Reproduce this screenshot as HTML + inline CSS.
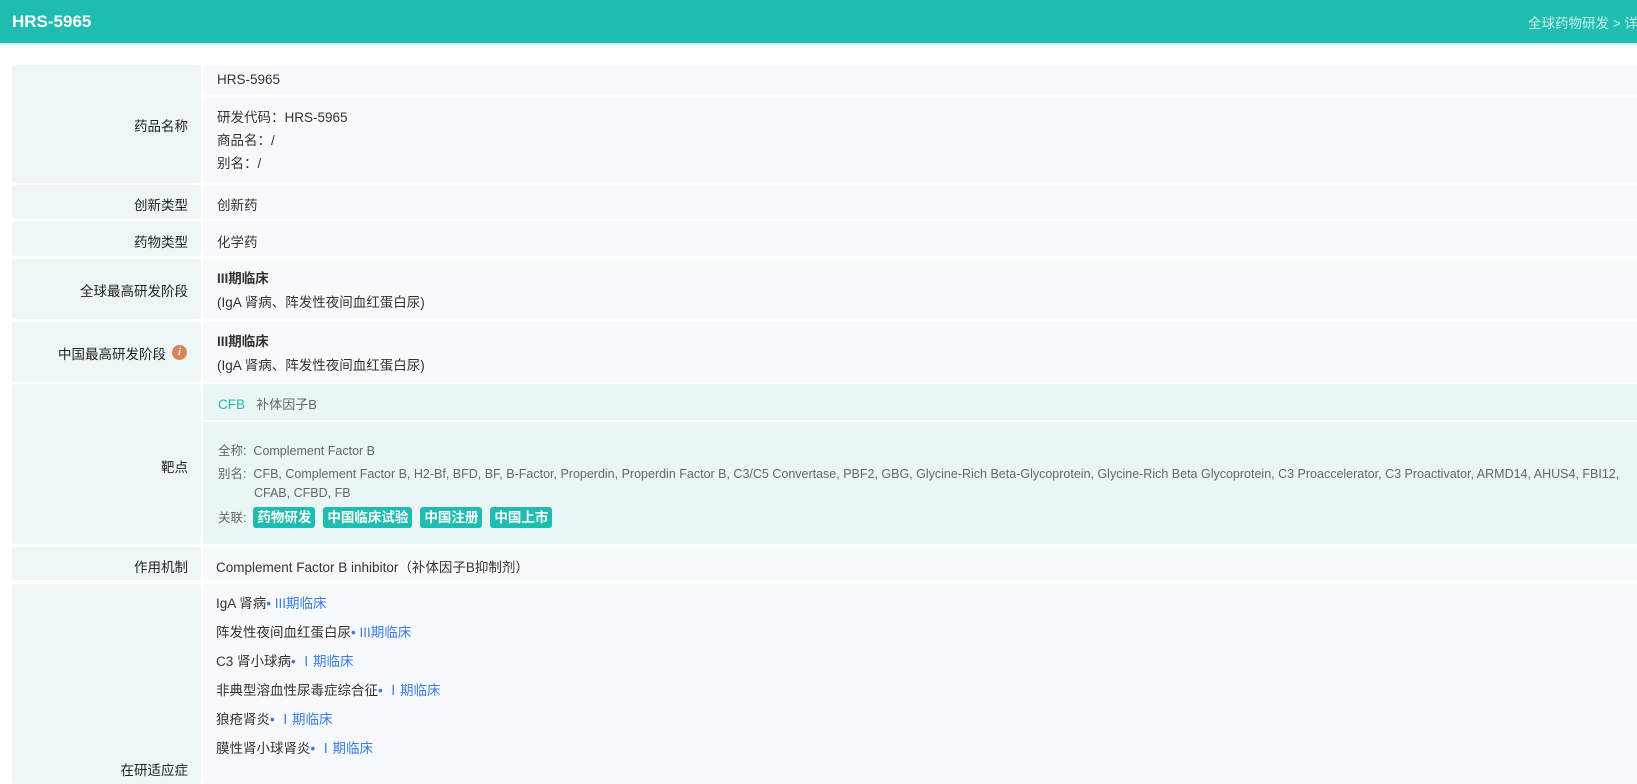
<!DOCTYPE html>
<html><head><meta charset="utf-8"><style>
*{margin:0;padding:0;box-sizing:border-box}
body{width:1637px;height:761px;overflow:hidden;background:#fff;font-family:"Liberation Sans","Noto Sans CJK SC",sans-serif;color:#333;font-size:13.5px;position:relative}
.hd{position:absolute;left:0;top:0;width:1637px;height:45px;background:#1fbdb0;border-bottom:2px solid #d6f0ee}
.hd .t{position:absolute;left:12px;top:12px;color:#fff;font-weight:bold;font-size:17px}
.hd .b{position:absolute;left:1528px;top:12px;color:#c8efea;font-size:13.5px;white-space:nowrap}
.l{position:absolute;left:12px;width:189px;background:#eef6f5;border-radius:3px}
.v{position:absolute;left:203px;right:0;background:#f7fafa}
.a{position:absolute;white-space:nowrap}
.lt{position:absolute;left:0;width:188px;text-align:right;white-space:nowrap;color:#222}
.tag{display:inline-block;background:#1fbdb0;color:#fff;font-weight:bold;border-radius:3px;padding:0 4px;height:21px;line-height:21px;margin-right:8px;font-size:13.5px}
.g{color:#666;font-size:12.5px}
.bl{color:#3a7be8}
</style></head><body>
<div class="hd"><div class="t">HRS-5965</div><div class="b">全球药物研发 &gt; 详情</div></div>

<div class="l" style="top:65px;height:118px"></div><div class="lt" style="top:115px">药品名称</div>
<div class="v" style="top:65px;height:30px"></div><div class="a" style="left:217px;top:72px">HRS-5965</div>
<div class="v" style="top:97px;height:86px"></div>
<div class="a" style="left:217px;top:106px">研发代码：HRS-5965</div>
<div class="a" style="left:217px;top:129px">商品名：/</div>
<div class="a" style="left:217px;top:152px">别名：/</div>

<div class="l" style="top:185px;height:34px"></div><div class="lt" style="top:194px">创新类型</div>
<div class="v" style="top:185px;height:34px"></div><div class="a" style="left:217px;top:194px">创新药</div>

<div class="l" style="top:221px;height:35px"></div><div class="lt" style="top:231px">药物类型</div>
<div class="v" style="top:221px;height:35px"></div><div class="a" style="left:217px;top:231px">化学药</div>

<div class="l" style="top:259px;height:60px"></div><div class="lt" style="top:280px">全球最高研发阶段</div>
<div class="v" style="top:259px;height:60px"></div>
<div class="a" style="left:217px;top:267px;font-weight:bold">III期临床</div>
<div class="a" style="left:217px;top:291px">(IgA 肾病、阵发性夜间血红蛋白尿)</div>

<div class="l" style="top:322px;height:60px"></div><div class="lt" style="top:343px;width:166px">中国最高研发阶段</div>
<div class="a" style="left:172px;top:345px;width:15px;height:15px;border-radius:50%;background:#d9825b;color:#fff;font-style:italic;font-weight:bold;font-size:11px;text-align:center;line-height:15px;font-family:'Liberation Serif',serif">i</div>
<div class="v" style="top:322px;height:60px"></div>
<div class="a" style="left:217px;top:330px;font-weight:bold">III期临床</div>
<div class="a" style="left:217px;top:354px">(IgA 肾病、阵发性夜间血红蛋白尿)</div>

<div class="l" style="top:384px;height:160px"></div><div class="lt" style="top:456px">靶点</div>
<div class="v" style="top:384px;height:36px;background:#eaf6f6"></div>
<div class="a" style="left:218px;top:394px"><span style="color:#1fbdb0">CFB</span>&nbsp;&nbsp;&nbsp;<span class="g" style="font-size:13px">补体因子B</span></div>
<div class="v" style="top:422px;height:122px;background:#eaf6f6"></div>
<div class="a g" style="left:218px;top:440px">全称:&nbsp; Complement Factor B</div>
<div class="a g" style="left:218px;top:463px">别名:&nbsp; CFB, Complement Factor B, H2-Bf, BFD, BF, B-Factor, Properdin, Properdin Factor B, C3/C5 Convertase, PBF2, GBG, Glycine-Rich Beta-Glycoprotein, Glycine-Rich Beta Glycoprotein, C3 Proaccelerator, C3 Proactivator, ARMD14, AHUS4, FBI12,</div>
<div class="a g" style="left:254px;top:486px">CFAB, CFBD, FB</div>
<div class="a g" style="left:218px;top:507px">关联:&nbsp; <span class="tag">药物研发</span><span class="tag">中国临床试验</span><span class="tag">中国注册</span><span class="tag">中国上市</span></div>

<div class="l" style="top:547px;height:33px"></div><div class="lt" style="top:556px">作用机制</div>
<div class="v" style="top:547px;height:33px"></div><div class="a" style="left:216px;top:556px">Complement Factor B inhibitor（补体因子B抑制剂）</div>

<div class="l" style="top:584px;height:200px"></div><div class="lt" style="top:759px">在研适应症</div>
<div class="v" style="top:584px;height:200px"></div>
<div class="a" style="left:216px;top:592px">IgA 肾病<span class="bl">• III期临床</span></div>
<div class="a" style="left:216px;top:621px">阵发性夜间血红蛋白尿<span class="bl">• III期临床</span></div>
<div class="a" style="left:216px;top:650px">C3 肾小球病<span class="bl">• Ⅰ期临床</span></div>
<div class="a" style="left:216px;top:679px">非典型溶血性尿毒症综合征<span class="bl">• Ⅰ期临床</span></div>
<div class="a" style="left:216px;top:708px">狼疮肾炎<span class="bl">• Ⅰ期临床</span></div>
<div class="a" style="left:216px;top:737px">膜性肾小球肾炎<span class="bl">• Ⅰ期临床</span></div>
</body></html>
